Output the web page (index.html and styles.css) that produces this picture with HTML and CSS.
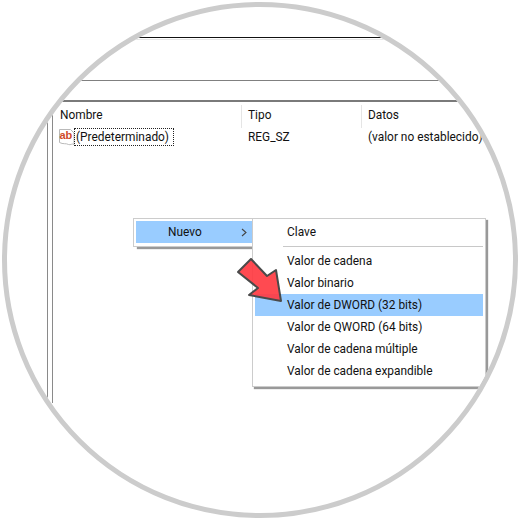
FILE: index.html
```html
<!DOCTYPE html>
<html lang="es">
<head>
  <meta charset="UTF-8" />
  <title>Editor del Registro</title>
  <link rel="stylesheet" href="styles.css">
</head>
<body>
  <div class="lens">
    <div class="rule-black"></div>
    <div class="rule-mid"></div>
    <div class="rule-head"></div>

    <div class="pane">
      <div class="tree-edge"></div>
      <div class="list">
        <div class="list-head">
          <div class="col col-name">Nombre</div>
          <div class="col col-type">Tipo</div>
          <div class="col col-data">Datos</div>
        </div>
        <div class="list-row">
          <div class="col-name cell-name">
            <svg class="reg-icon" width="17" height="18" viewBox="0 0 17 18">
              <path d="M1.5 1.5H12.5L16 5V16.5C14 15 12.5 17.5 10.5 16.5C8 15 5 16.5 1.5 14.5Z" fill="#fff" stroke="#b9b9b9"/>
              <text x="1.5" y="11" class="reg-icon-text">ab</text>
            </svg>
            <span class="focus-name">(Predeterminado)</span>
          </div>
          <div class="col-type cell">REG_SZ</div>
          <div class="col-data cell">(valor no establecido)</div>
        </div>
      </div>
    </div>

    <div class="menu menu-parent">
      <div class="menu-item active">
        <span>Nuevo</span>
        <svg width="6" height="9" viewBox="0 0 6 9"><path d="M1 1L5 4.5L1 8" fill="none" stroke="#444" stroke-width="1.1"/></svg>
      </div>
    </div>

    <div class="menu menu-sub">
      <div class="sub-item">Clave</div>
      <div class="sub-sep"></div>
      <div class="sub-item">Valor de cadena</div>
      <div class="sub-item">Valor binario</div>
      <div class="sub-item active">Valor de DWORD (32 bits)</div>
      <div class="sub-item">Valor de QWORD (64 bits)</div>
      <div class="sub-item">Valor de cadena múltiple</div>
      <div class="sub-item">Valor de cadena expandible</div>
    </div>

    <svg class="arrow" width="50" height="50" viewBox="0 0 50 50">
      <path d="M1 14L14 1L30 18L39 12L44 43L12 37L21 30Z" fill="#ff3b42" fill-opacity="0.92" stroke="#4a4a4a" stroke-width="2" stroke-linejoin="round"/>
    </svg>
  </div>
</body>
</html>
```

FILE: styles.css
```css
* {
  box-sizing: border-box;
}

body {
  margin: 0;
  background: #fff;
  font-family: Roboto, 'Noto Sans', sans-serif;
  font-size: 11.9px;
  color: #111;
}

/* Round crop around the screenshot */
.lens {
  position: relative;
  width: 516px;
  height: 516px;
  margin: 2px;
  border: 5px solid #ccc;
  border-radius: 50%;
  overflow: hidden;
  background: #fff;
}

.rule-black {
  height: 3px;
  margin: 30px 0 0;
  border-top: 1px solid #111;
  border-bottom: 1px solid #e6e6e6;
}

.rule-mid {
  height: 1px;
  margin-top: 40px;
  background: #808080;
}

.rule-head {
  height: 2px;
  margin-top: 19px;
  background: #7a7a7a;
}

.pane {
  display: flex;
  height: 301px;
  padding-left: 40px;
}

.tree-edge {
  width: 6px;
  margin-top: 13px;
  border-left: 1px solid #8a8a8a;
  border-right: 1px solid #8a8a8a;
}

.list {
  flex: 1;
}

.list-head,
.list-row {
  display: flex;
}

.list-head {
  height: 26px;
  padding-top: 3px;
  line-height: 21px;
}

.col-name {
  width: 189px;
  padding-left: 7px;
}

.col-type {
  width: 120px;
  padding-left: 6px;
}

.col-data {
  padding-left: 6px;
  white-space: nowrap;
}

.col-name,
.col-type {
  flex: none;
}

.list-head .col-name,
.list-head .col-type {
  border-right: 1px solid #e5e5e5;
}

.list-row {
  height: 20px;
  line-height: 18px;
}

.cell-name {
  display: flex;
  align-items: center;
  padding-left: 5px;
  height: 18px;
}

.reg-icon {
  flex: none;
}

.reg-icon-text {
  font-family: 'Liberation Sans', sans-serif;
  font-size: 11px;
  font-weight: 700;
  fill: #cf4a28;
}

.focus-name {
  margin-left: -1px;
  padding: 0 4px 0 1px;
  border: 1px dotted #222;
  line-height: 16px;
}

.cell {
  line-height: 18px;
}

.menu {
  position: absolute;
  background: #fff;
  border: 1px solid #ccc;
}

.menu-parent {
  left: 126px;
  top: 211px;
  width: 121px;
  height: 29px;
  padding: 2px 0 2px 2px;
  box-shadow: 3px 3px 1px -1px #999;
}

.menu-item {
  display: flex;
  align-items: center;
  justify-content: space-between;
  height: 22px;
  padding: 0 6px 0 32px;
}

.active {
  background: #99ccff;
}

.menu-sub {
  left: 245px;
  top: 211px;
  width: 234px;
  height: 169px;
  padding: 2px;
  box-shadow: 2px 2px 1px #999;
}

.sub-item {
  height: 22px;
  padding-left: 32px;
  line-height: 22px;
}

.sub-sep {
  height: 1px;
  margin: 3px 0 3px 28px;
  background: #c8c8c8;
}

.arrow {
  position: absolute;
  left: 230px;
  top: 251px;
}
```
